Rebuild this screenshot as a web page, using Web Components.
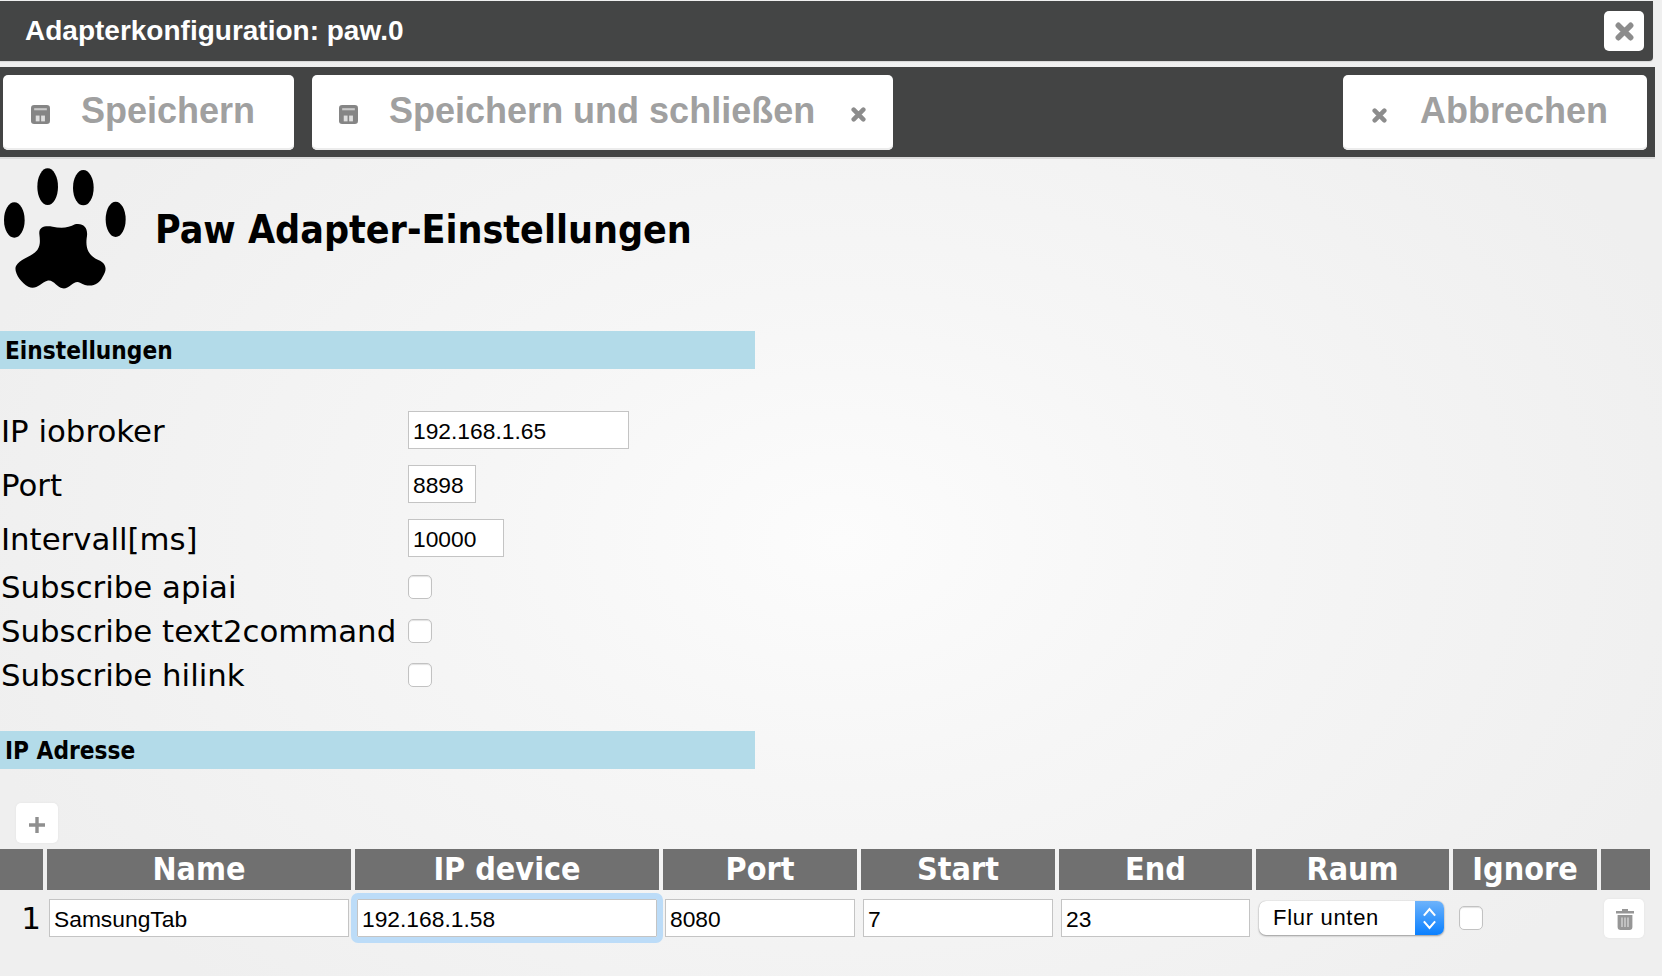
<!DOCTYPE html>
<html lang="de">
<head>
<meta charset="utf-8">
<title>Adapterkonfiguration: paw.0</title>
<style>
  html, body { margin: 0; height: 100%; }
  body {
    width: 1662px;
    height: 976px;
    overflow: hidden;
    background: radial-gradient(ellipse 900px 620px at 840px 540px, #fcfcfc 0%, #f6f6f6 40%, #efefef 100%);
    font-family: "DejaVu Sans", sans-serif;
    color: #000;
  }
</style>
</head>
<body>
<dialog-titlebar>Adapterkonfiguration: paw.0</dialog-titlebar>
<tool-bar>
  <tool-button lead="save" style="--pad-l:28px;--gap:31px;--pad-r:39px">Speichern</tool-button>
  <tool-button lead="save" trail="close" style="--pad-l:27px;--gap:31px;--pad-r:27px;--gap-r:36px">Speichern und schließen</tool-button>
  <tool-button slot="right" lead="close" style="--pad-l:29px;--gap:33px;--pad-r:39px">Abbrechen</tool-button>
</tool-bar>
<paw-heading>Paw Adapter-Einstellungen</paw-heading>
<section-bar style="margin-top:31px">Einstellungen</section-bar>
<config-form>
  <form-row label="IP iobroker"><text-field style="width:221px">192.168.1.65</text-field></form-row>
  <form-row label="Port"><text-field style="width:68px">8898</text-field></form-row>
  <form-row label="Intervall[ms]"><text-field style="width:96px">10000</text-field></form-row>
  <form-row check label="Subscribe apiai"><check-box></check-box></form-row>
  <form-row check label="Subscribe text2command"><check-box></check-box></form-row>
  <form-row check label="Subscribe hilink"><check-box></check-box></form-row>
</config-form>
<section-bar style="margin-top:24px">IP Adresse</section-bar>
<icon-button icon="plus" style="margin:34px 0 6px 16px;width:42px;height:40px;padding-top:3px"></icon-button>
<device-table></device-table>

<script>
const ICONS = {
  save: `<svg viewBox="0 0 18 18" width="19" height="19"><path fill="#858585" d="M3 0h12a3 3 0 0 1 3 3v12a3 3 0 0 1-3 3H3a3 3 0 0 1-3-3V3a3 3 0 0 1 3-3z"/><rect x="3" y="3" width="12" height="2" fill="#c9c9c9"/><rect x="4.500" y="10" width="3.600" height="5.500" fill="#dedede"/><rect x="9.600" y="10" width="3.600" height="5.500" fill="#dedede"/></svg>`,
  close: `<svg viewBox="0 0 14 14" width="100%" height="100%"><path stroke="#8c8c8c" stroke-width="4.200" stroke-linecap="round" d="M2.500 2.500l9 9M11.500 2.500l-9 9"/></svg>`,
  plus: `<svg viewBox="0 0 16 16" width="16" height="16"><path stroke="#8f8f8f" stroke-width="3.400" d="M8 0v16M0 8h16"/></svg>`,
  trash: `<svg viewBox="0 0 18 21" width="18" height="21"><path fill="#969696" d="M6 0h6v2h6v2.400H0V2h6zM1.600 6h14.800v12a3 3 0 0 1-3 3H4.600a3 3 0 0 1-3-3z"/><path stroke="#d8d8d8" stroke-width="1.300" d="M6 8.500v9.500M9 8.500v9.500M12 8.500v9.500"/></svg>`
};

// kleine Hilfe: Klasse mit festem Shadow-Inhalt
function shadow(el, html) {
  el.attachShadow({ mode: 'open' }).innerHTML = html;
}

const LUCIDA_BOLD = '"DejaVu Sans Condensed", "DejaVu Sans", sans-serif';

class DialogTitlebar extends HTMLElement {
  connectedCallback() {
    shadow(this, `
      <style>
        :host {
          display: flex; align-items: center; justify-content: space-between;
          box-sizing: border-box; width: 1653px; height: 60px; margin-top: 1px;
          padding: 0 9px 0 25px;
          background: #444545; border-bottom-right-radius: 4px;
          box-shadow: 0 1px 1px #d6d6d6;
          color: #fff; font: bold 28px "Liberation Sans", Arial, sans-serif;
        }
        .x {
          width: 40px; height: 40px; background: #fff; border-radius: 5px;
          display: flex; align-items: center; justify-content: center;
        }
        .x span { width: 19px; height: 19px; display: block; }
        svg { display: block; }
      </style>
      <span class="title"><slot></slot></span>
      <span class="x"><span>${ICONS.close}</span></span>
    `);
  }
}

class ToolBar extends HTMLElement {
  connectedCallback() {
    shadow(this, `
      <style>
        :host {
          display: flex; justify-content: space-between; align-items: center;
          box-sizing: border-box; width: 1655px; height: 92px; margin-top: 6px;
          padding: 1px 8px 0 3px;
          background: #434444; border-bottom: 2px solid #dcdcdc;
        }
        .left { display: flex; gap: 18px; }
      </style>
      <div class="left"><slot></slot></div>
      <slot name="right"></slot>
    `);
  }
}

class ToolButton extends HTMLElement {
  connectedCallback() {
    const lead = this.getAttribute('lead');
    const trail = this.getAttribute('trail');
    shadow(this, `
      <style>
        :host {
          display: flex; align-items: center; box-sizing: border-box; height: 75px;
          padding: 0 var(--pad-r) 0 var(--pad-l);
          background: #fff; border-radius: 5px; box-shadow: inset 0 -2px 0 #ececec;
          color: #a0a0a0; font: bold 36px "Liberation Sans", Arial, sans-serif;
        }
        svg { display: block; }
        .ic { display: block; width: 19px; margin-right: var(--gap); margin-top: 3px; }
        .ic.small { width: 15px; height: 15px; margin-top: 5px; }
        .tr { display: block; width: 15px; height: 15px; margin: 4px 0 0 var(--gap-r); }
        .tx { margin-top: -4px; }
      </style>
      <span class="ic ${lead === 'close' ? 'small' : ''}">${ICONS[lead]}</span>
      <span class="tx"><slot></slot></span>
      ${trail ? `<span class="tr">${ICONS[trail]}</span>` : ''}
    `);
  }
}

class PawHeading extends HTMLElement {
  connectedCallback() {
    shadow(this, `
      <style>
        :host { display: flex; align-items: center; gap: 15px; height: 140px; margin-top: 1px; }
        svg { width: 140px; height: 140px; flex: none; filter: blur(.5px); }
        h1 { margin: 0 0 2px; font: bold 39px ${LUCIDA_BOLD}; }
      </style>
      <svg viewBox="0 0 420 420">
        <ellipse cx="143" cy="80" rx="31" ry="55"/>
        <ellipse cx="250" cy="83" rx="31" ry="53"/>
        <ellipse cx="43" cy="180" rx="31" ry="53"/>
        <ellipse cx="347" cy="178" rx="30" ry="53"/>
        <path d="M118 222 C116 200 135 196 158 200 C180 205 205 205 225 193 C252 188 266 205 260 235
                 C256 268 268 288 295 300 C320 310 322 330 308 350 C296 375 270 385 240 368
                 C222 358 208 388 188 385 C170 383 162 358 142 362 C122 368 108 392 85 380
                 C62 368 40 335 48 318 C60 295 95 292 112 270 C122 255 120 240 118 222 Z"/>
      </svg>
      <h1><slot></slot></h1>
    `);
  }
}

class SectionBar extends HTMLElement {
  connectedCallback() {
    shadow(this, `
      <style>
        :host {
          display: flex; align-items: center; box-sizing: border-box;
          width: 755px; height: 38px; padding: 1px 0 0 5px;
          background: #b3dbe9; font: bold 24.200px ${LUCIDA_BOLD};
        }
      </style>
      <slot></slot>
    `);
  }
}

class ConfigForm extends HTMLElement {
  connectedCallback() {
    shadow(this, `
      <style>:host { display: flex; flex-direction: column; margin-top: 42px; }</style>
      <slot></slot>
    `);
  }
}

class FormRow extends HTMLElement {
  connectedCallback() {
    const isCheck = this.hasAttribute('check');
    shadow(this, `
      <style>
        :host {
          display: grid; grid-template-columns: 407px 1fr; grid-template-rows: 100%; align-items: center;
          height: ${isCheck ? 24 : 38}px; margin-bottom: ${isCheck ? 20 : 16}px;
          padding-left: 1px;
          font-size: 30.800px;
        }
        .l { white-space: nowrap; margin-top: ${isCheck ? 0 : 2}px; }
      </style>
      <span class="l">${this.getAttribute('label')}</span>
      <div><slot></slot></div>
    `);
    if (isCheck && this.previousElementSibling && !this.previousElementSibling.hasAttribute('check')) {
      this.style.marginTop = '2px';
    }
  }
}

class TextField extends HTMLElement {
  connectedCallback() {
    shadow(this, `
      <style>
        :host {
          display: flex; align-items: center; box-sizing: border-box; height: 38px;
          padding: 2px 0 0 4px; background: #fff; border: 1px solid #c4c4c4;
          font: 22.800px "Liberation Sans", Arial, sans-serif; color: #000;
        }
        :host([focused]) { outline: 6px solid #bcdcf8; outline-offset: 0; border-radius: 1px; }
      </style>
      <slot></slot>
    `);
  }
}

class CheckBox extends HTMLElement {
  connectedCallback() {
    shadow(this, `
      <style>
        :host {
          display: block; box-sizing: border-box; width: 24px; height: 24px;
          background: #fff; border: 1px solid #c2c2c2; border-radius: 5px;
          box-shadow: inset 0 1px 1px #e2e2e2;
        }
      </style>
    `);
  }
}

class IconButton extends HTMLElement {
  connectedCallback() {
    shadow(this, `
      <style>
        :host {
          display: flex; align-items: center; justify-content: center; box-sizing: border-box;
          background: #fff; border-radius: 5px; box-shadow: 0 0 2px #e0e0e0;
        }
      </style>
      ${ICONS[this.getAttribute('icon')]}
    `);
  }
}

class SelectBox extends HTMLElement {
  connectedCallback() {
    shadow(this, `
      <style>
        :host {
          display: flex; box-sizing: border-box; width: 185px; height: 34px;
          background: #fff; border-radius: 7px; overflow: hidden;
          box-shadow: 0 1px 2px #9a9a9a, 0 0 1px #aaa;
          font: 22px "Liberation Sans", Arial, sans-serif; letter-spacing: .7px;
        }
        .v { flex: 1; display: flex; align-items: center; padding-left: 14px; }
        .b {
          width: 29px; display: flex; align-items: center; justify-content: center;
          background: linear-gradient(#6db3fb, #0a80ff);
        }
      </style>
      <span class="v"><slot></slot></span>
      <span class="b"><svg viewBox="0 0 16 26" width="15" height="25" fill="none" stroke="#fff" stroke-width="2.200"><path d="M2 10l6-7 6 7M2 16l6 7 6-7"/></svg></span>
    `);
  }
}

const COLS = '43px 304px 304px 194px 194px 193px 193px 144px 49px';

class DeviceTable extends HTMLElement {
  connectedCallback() {
    const heads = ['', 'Name', 'IP device', 'Port', 'Start', 'End', 'Raum', 'Ignore', ''];
    shadow(this, `
      <style>
        :host { display: block; width: 1650px; }
        .grid { display: grid; grid-template-columns: ${COLS}; column-gap: 4px; }
        .head { height: 40px; margin-bottom: 10px; }
        .head div {
          background: #707070; color: #fff; text-align: center;
          font: bold 32px/41px ${LUCIDA_BOLD};
        }
        .row { align-items: start; }
        .num { font-size: 31px; line-height: 38px; text-align: right; padding-right: 2px; }
        .cell { padding: 0 2px; }
        .sel { padding: 2px 0 0; }
        .chk { padding: 7px 0 0 6px; }
        .del { padding-left: 3px; }
        text-field { width: 100%; }
      </style>
      <div class="grid head">${heads.map(h => `<div>${h}</div>`).join('')}</div>
      <div class="grid row">
        <div class="num">1</div>
        <div class="cell"><text-field>SamsungTab</text-field></div>
        <div class="cell"><text-field focused>192.168.1.58</text-field></div>
        <div class="cell"><text-field>8080</text-field></div>
        <div class="cell"><text-field>7</text-field></div>
        <div class="cell"><text-field>23</text-field></div>
        <div class="sel" style="padding-left:3px"><select-box>Flur unten</select-box></div>
        <div class="chk"><check-box></check-box></div>
        <div class="del"><icon-button icon="trash" style="width:40px;height:39px;padding:2px 0 0 2px"></icon-button></div>
      </div>
    `);
  }
}

customElements.define('dialog-titlebar', DialogTitlebar);
customElements.define('tool-bar', ToolBar);
customElements.define('tool-button', ToolButton);
customElements.define('paw-heading', PawHeading);
customElements.define('section-bar', SectionBar);
customElements.define('config-form', ConfigForm);
customElements.define('form-row', FormRow);
customElements.define('text-field', TextField);
customElements.define('check-box', CheckBox);
customElements.define('icon-button', IconButton);
customElements.define('select-box', SelectBox);
customElements.define('device-table', DeviceTable);
</script>
</body>
</html>
